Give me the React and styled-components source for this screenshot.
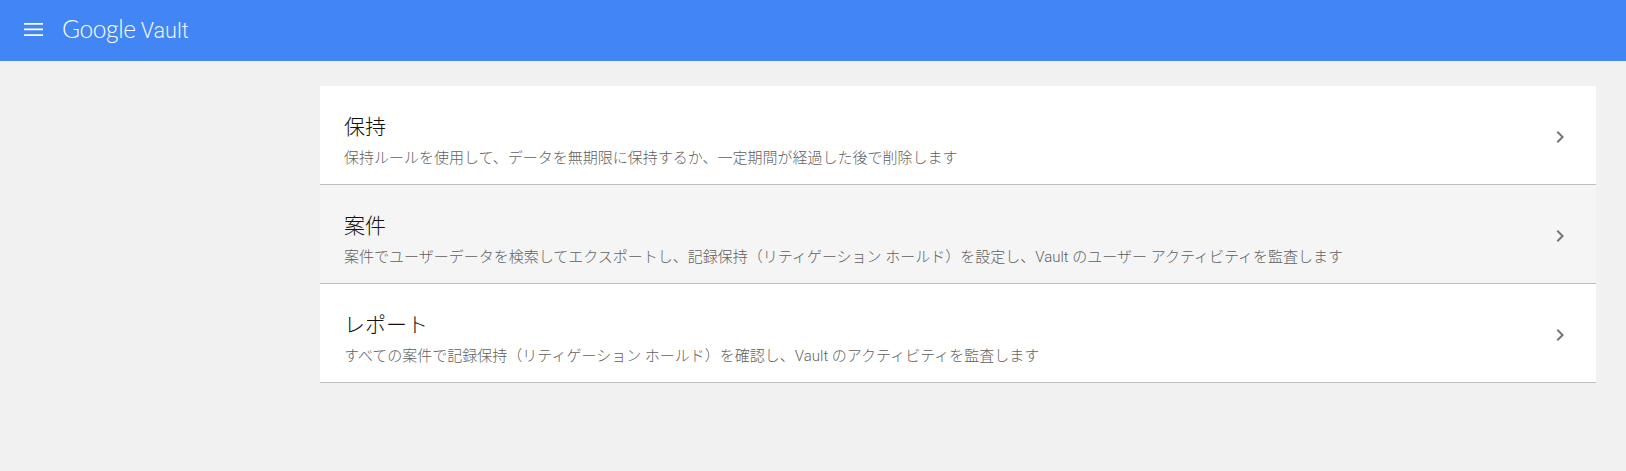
import React from 'react';
import styled, { createGlobalStyle } from 'styled-components';

const GlobalStyle = createGlobalStyle`
  html, body {
    margin: 0;
    padding: 0;
    background: #f1f1f1;
    font-family: Roboto, "Noto Sans CJK JP", sans-serif;
  }
`;

export default function App() {
  return (
    <Page>
      <GlobalStyle />
      <Header>
        <MenuButton aria-label="menu">
          <svg width="19" height="13" viewBox="0 0 19 13">
            <path d="M0 0h19v1.7H0zM0 5.6h19v1.7H0zM0 11.2h19v1.7H0z" fill="#fff" />
          </svg>
        </MenuButton>
        <Logo>
          <LogoGoogle>Google</LogoGoogle>
          <LogoVault>Vault</LogoVault>
        </Logo>
      </Header>
      <Main>
        <List>
          {items.map(item => {
            return (
              <Row key={item.id} $active={item.active}>
                <RowText>
                  <RowTitle>{item.title}</RowTitle>
                  <RowDesc>{item.desc}</RowDesc>
                </RowText>
                <Chevron width="24" height="24" viewBox="0 0 24 24">
                  <path d="M10 6 8.59 7.41 13.17 12l-4.58 4.59L10 18l6-6z" fill="#757575" />
                </Chevron>
              </Row>
            );
          })}
        </List>
      </Main>
    </Page>
  );
}

const Page = styled.div`
  min-height: 471px;
  background: #f1f1f1;
`;

const Header = styled.header`
  display: flex;
  align-items: center;
  height: 61px;
  padding-left: 24px;
  background: #4285f4;
`;

const MenuButton = styled.div`
  display: flex;
  align-items: center;
  width: 38px;
  height: 24px;
  margin-bottom: 2px;
`;

const Logo = styled.div`
  display: flex;
  align-items: baseline;
  margin-bottom: 4px;
  color: #fff;
`;

const LogoGoogle = styled.span`
  font-family: Lato, sans-serif;
  font-size: 24.5px;
  font-weight: 300;
  letter-spacing: -0.35px;
`;

const LogoVault = styled.span`
  margin-left: 5px;
  font-family: Roboto, sans-serif;
  font-size: 21.5px;
  font-weight: 300;
  opacity: 0.9;
`;

const Main = styled.main`
  padding: 25px 30px 0 320px;
`;

const List = styled.div`
  display: flex;
  flex-direction: column;
`;

const Row = styled.div`
  display: flex;
  align-items: center;
  justify-content: space-between;
  box-sizing: border-box;
  height: 99px;
  padding: 4px 24px 0;
  background: ${props => (props.$active ? '#f5f5f5' : '#fff')};
  border-bottom: 1px solid #bdbdbd;
`;

const RowText = styled.div`
  display: flex;
  flex-direction: column;
  padding-top: 8px;
`;

const RowTitle = styled.div`
  margin-top: -2px;
  font-size: 21px;
  line-height: 28px;
  color: #111;
  font-weight: 300;
`;

const RowDesc = styled.div`
  margin-top: 7px;
  font-size: 15px;
  line-height: 20px;
  color: #5f5f5f;
  font-weight: 300;
`;

const Chevron = styled.svg`
  flex: none;
`;

const items = [
  {
    id: 1,
    title: '保持',
    desc: '保持ルールを使用して、データを無期限に保持するか、一定期間が経過した後で削除します',
  },
  {
    id: 2,
    title: '案件',
    desc: '案件でユーザーデータを検索してエクスポートし、記録保持（リティゲーション ホールド）を設定し、Vault のユーザー アクティビティを監査します',
    active: true,
  },
  {
    id: 3,
    title: 'レポート',
    desc: 'すべての案件で記録保持（リティゲーション ホールド）を確認し、Vault のアクティビティを監査します',
  },
];
